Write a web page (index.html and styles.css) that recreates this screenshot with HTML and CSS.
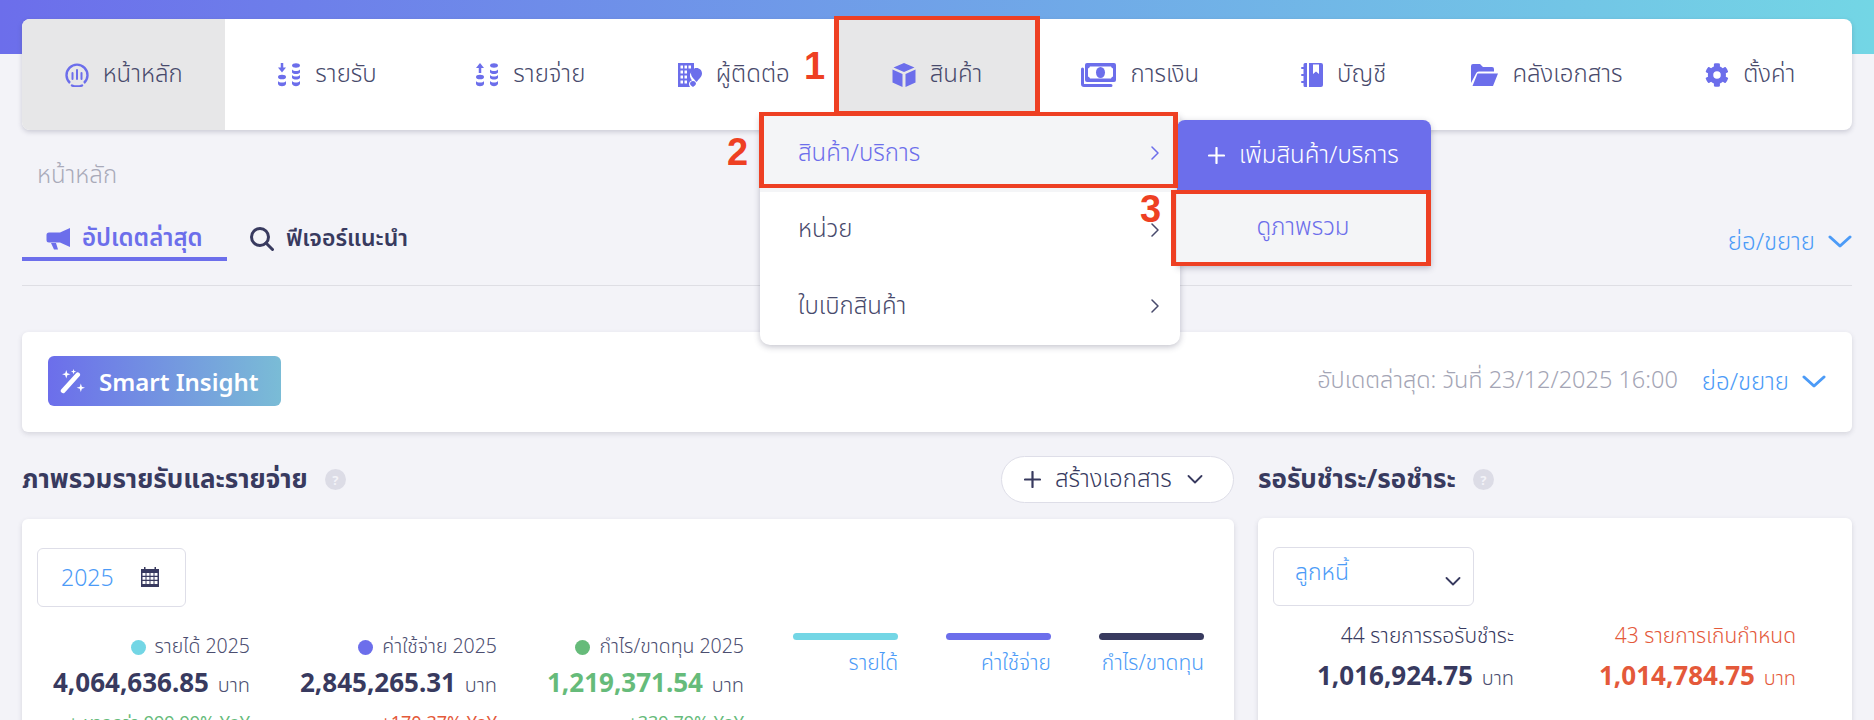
FILE: index.html
```html
<!DOCTYPE html>
<html lang="th">
<head>
<meta charset="utf-8">
<title>หน้าหลัก</title>
<link rel="stylesheet" href="styles.css">
</head>
<body>
<div class="hero"></div>
<div class="page">
  <nav class="nav">
    <a class="nav-item active"><svg class="ni" viewBox="0 0 24 24"><path d="M5 20A10.500 10.500 0 1 1 19 20" fill="none" stroke="currentColor" stroke-width="2.400"/><path d="M7 22.500c3 1.200 7 1.200 10 0" fill="none" stroke="currentColor" stroke-width="2.400" stroke-linecap="round"/><path d="M7.500 10v6M12 7v9M16.500 10v6" stroke="currentColor" stroke-width="2" stroke-linecap="round"/></svg>หน้าหลัก</a>
    <a class="nav-item"><svg class="ni" viewBox="0 0 24 24"><path d="M5 0v5" stroke="currentColor" stroke-width="2.500"/><path d="M1 4.500h8L5 9.500z" fill="currentColor"/><ellipse cx="5" cy="14" rx="4" ry="2.300" fill="currentColor"/><path d="M1 18c1 2 7 2 8 0v3c-1 3-7 3-8 0z" fill="currentColor"/><path d="M15 2.500c0-3 8-3 8 0s-8 3-8 0zM15 6.500c2 2 6 2 8 0v3c-2 2-6 2-8 0zM15 12c2 2 6 2 8 0v3c-2 2-6 2-8 0zM15 18c2 2 6 2 8 0v3c-2 3-6 3-8 0z" fill="currentColor"/></svg>รายรับ</a>
    <a class="nav-item"><svg class="ni" viewBox="0 0 24 24"><path d="M5 10V4" stroke="currentColor" stroke-width="2.500"/><path d="M1 5h8L5 0z" fill="currentColor"/><ellipse cx="5" cy="14" rx="4" ry="2.300" fill="currentColor"/><path d="M1 18c1 2 7 2 8 0v3c-1 3-7 3-8 0z" fill="currentColor"/><path d="M15 2.500c0-3 8-3 8 0s-8 3-8 0zM15 6.500c2 2 6 2 8 0v3c-2 2-6 2-8 0zM15 12c2 2 6 2 8 0v3c-2 2-6 2-8 0zM15 18c2 2 6 2 8 0v3c-2 3-6 3-8 0z" fill="currentColor"/></svg>รายจ่าย</a>
    <a class="nav-item"><svg class="ni" viewBox="0 0 24 24"><path fill-rule="evenodd" d="M0 0h16v7.500c-3 1-4.500 3.500-4 6 .3 1.500 1 2.800 2 4-1.500.200-3 1.500-3 3.500 0 1 .3 2 1 3H0zM2.500 2.500v3H5v-3zM6.500 2.500v3H9v-3zM10.500 2.500v3H13v-3zM2.500 7.500v3H5v-3zM6.500 7.500v3H9v-3zM2.500 12.500v3H5v-3zM6.500 12.500v3H9v-3zM2.500 17.500v3H5v-3zM6.500 17.500v3H9v-3z" fill="currentColor"/><path d="M18.500 5c3 0 5.500 2.300 5.500 5.500 0 3-3 5.500-5.500 8.500-2.500-3-5.500-5.500-5.500-8.500C13 7.300 15.500 5 18.500 5z" fill="currentColor"/><path d="M15 18c1.700 0 3 1.300 3 2.800 0 1.200-1.700 2.200-3 3.200-1.300-1-3-2-3-3.200C12 19.300 13.300 18 15 18z" fill="currentColor"/></svg>ผู้ติดต่อ</a>
    <a class="nav-item active"><svg class="ni" viewBox="0 0 24 24"><path d="M12 0l10.500 4.500L12 9 1.500 4.500z M0.500 6.500l10 4.500v13l-10-4.500z M23.500 6.500v13l-10 4.500V11z" fill="currentColor"/></svg>สินค้า</a>
    <a class="nav-item"><svg class="ni money" viewBox="0 0 35 24"><path d="M6 0h27a2 2 0 0 1 2 2v15a2 2 0 0 1-2 2H6a2 2 0 0 1-2-2V2a2 2 0 0 1 2-2z" fill="currentColor"/><path d="M9 3.500h21a3 3 0 0 0 2 2v8a3 3 0 0 0-2 2H9a3 3 0 0 0-2-2v-8a3 3 0 0 0 2-2z" fill="#fff"/><ellipse cx="19.500" cy="9.500" rx="4.500" ry="5.500" fill="currentColor"/><path d="M1.500 6v15a1.500 1.500 0 0 0 1.500 1.500h27" fill="none" stroke="currentColor" stroke-width="3" stroke-linecap="round"/></svg>การเงิน</a>
    <a class="nav-item"><svg class="ni book" viewBox="0 0 22 24"><path fill-rule="evenodd" d="M2.500 1.500A1.500 1.500 0 0 1 4 0h2v24H4a1.500 1.500 0 0 1-1.500-1.500V20H1a1 1 0 0 1 0-2h1.500v-5H1a1 1 0 0 1 0-2h1.500V6H1a1 1 0 0 1 0-2h1.500zM8 0h12a2 2 0 0 1 2 2v20a2 2 0 0 1-2 2H8zM12 1.500V11l3-2.500 3 2.500V1.500z" fill="currentColor"/></svg>บัญชี</a>
    <a class="nav-item"><svg class="ni folder" viewBox="0 0 27 24"><path d="M0 3a2 2 0 0 1 2-2h7l3 3h9a2 2 0 0 1 2 2v2.500H8c-1.500 0-2.500.7-3 2L0 20z" fill="currentColor"/><path d="M6.500 10.500H27l-5 12.500H1.500z" fill="currentColor"/></svg>คลังเอกสาร</a>
    <a class="nav-item"><svg class="ni" viewBox="0 0 512 512"><path d="M487 316l-43-25c4-23 4-47 0-70l43-25c5-3 7-9 5-14-11-36-30-68-55-95-4-4-10-5-15-2l-43 25c-18-15-39-27-61-35V25c0-6-4-11-9-12-37-8-75-8-110 0-6 1-9 6-9 12v50c-22 8-43 20-61 35L86 85c-5-3-11-2-15 2-25 27-44 59-55 95-2 5 0 11 5 14l43 25c-4 23-4 47 0 70l-43 25c-5 3-7 9-5 14 11 36 30 68 55 95 4 4 10 5 15 2l43-25c18 15 39 27 61 35v50c0 6 4 11 9 12 37 8 75 8 110 0 6-1 9-6 9-12v-50c22-8 43-20 61-35l43 25c5 3 11 2 15-2 25-27 44-59 55-95 2-5 0-11-5-14zM256 336a80 80 0 1 1 0-160 80 80 0 0 1 0 160z" fill="currentColor"/></svg>ตั้งค่า</a>
  </nav>

  <div class="crumb">หน้าหลัก</div>

  <div class="tabbar">
    <div class="tabs">
      <a class="tab on"><svg class="ti" viewBox="0 0 24 22"><path d="M24 0v19l-10-4.500H3a2.500 2.500 0 0 1-2.500-2.500V7A2.500 2.500 0 0 1 3 4.500h11z" fill="currentColor"/><path d="M5 15h5l2 6.500H8z" fill="currentColor"/></svg>อัปเดตล่าสุด</a>
      <a class="tab"><svg class="ti" viewBox="0 0 24 24"><circle cx="10" cy="10" r="8.500" fill="none" stroke="currentColor" stroke-width="3"/><path d="M16 16l6.500 6.500" stroke="currentColor" stroke-width="3" stroke-linecap="round"/></svg>ฟีเจอร์แนะนำ</a>
    </div>
    <a class="toggle">ย่อ/ขยาย<svg class="chev" viewBox="0 0 24 13"><path d="M2 2l10 9 10-9" fill="none" stroke="currentColor" stroke-width="3" stroke-linecap="round" stroke-linejoin="round"/></svg></a>
  </div>

  <section class="insight card">
    <div class="badge"><svg class="wand" viewBox="0 0 24 24"><path d="M3 21L17 5.500" stroke="#fff" stroke-width="4.500" stroke-linecap="round"/><path d="M6 1l1 3 3 1-3 1-1 3-1-3-3-1 3-1zM13 0l.7 1.800 1.800.7-1.800.7-.7 1.800-.7-1.800-1.800-.7 1.800-.7zM20 14l1 3 3 1-3 1-1 3-1-3-3-1 3-1z" fill="#fff"/></svg>Smart Insight</div>
    <div class="insight-r">
      <span class="updated">อัปเดตล่าสุด: วันที่ 23/12/2025 16:00</span>
      <a class="toggle">ย่อ/ขยาย<svg class="chev" viewBox="0 0 24 13"><path d="M2 2l10 9 10-9" fill="none" stroke="currentColor" stroke-width="3" stroke-linecap="round" stroke-linejoin="round"/></svg></a>
    </div>
  </section>

  <div class="cols">
    <div class="col-main">
      <div class="sec-head">
        <h2>ภาพรวมรายรับและรายจ่าย<span class="help">?</span></h2>
        <button class="create"><svg class="plus" viewBox="0 0 17 17"><path d="M8.500 1v15M1 8.500h15" stroke="currentColor" stroke-width="2.200" stroke-linecap="round"/></svg>สร้างเอกสาร<svg class="small-chev" viewBox="0 0 16 9"><path d="M1.500 1l6.500 6.500L14.500 1" fill="none" stroke="currentColor" stroke-width="1.800" stroke-linecap="round" stroke-linejoin="round"/></svg></button>
      </div>
      <div class="card panel">
        <div class="year">2025<svg class="cal" viewBox="0 0 18 20"><path fill-rule="evenodd" d="M0 2h3V0h1.500v2h9V0H15v2h3v18H0zM1.500 6v2.800h3V6zM5.500 6v2.800h3V6zM9.500 6v2.800h3V6zM13.500 6v2.800h3V6zM1.500 10v2.800h3V10zM5.500 10v2.800h3V10zM9.500 10v2.800h3V10zM13.500 10v2.800h3V10zM1.500 14v3h3v-3zM5.500 14v3h3v-3zM9.500 14v3h3v-3zM13.500 14v3h3v-3z" fill="#383a5f"/></svg></div>
        <div class="stats-row">
          <div class="stats">
            <div class="stat">
              <div class="stat-l"><i class="dot cyan"></i>รายได้ 2025</div>
              <div class="stat-v">4,064,636.85 <span>บาท</span></div>
              <div class="stat-d green">+ มากกว่า 999.99% YoY</div>
            </div>
            <div class="stat">
              <div class="stat-l"><i class="dot purple"></i>ค่าใช้จ่าย 2025</div>
              <div class="stat-v">2,845,265.31 <span>บาท</span></div>
              <div class="stat-d red">+170.37% YoY</div>
            </div>
            <div class="stat">
              <div class="stat-l"><i class="dot green-bg"></i>กำไร/ขาดทุน 2025</div>
              <div class="stat-v green">1,219,371.54 <span>บาท</span></div>
              <div class="stat-d green">+339.79% YoY</div>
            </div>
          </div>
          <div class="legend">
            <div class="leg"><i class="bar cyan"></i>รายได้</div>
            <div class="leg"><i class="bar purple"></i>ค่าใช้จ่าย</div>
            <div class="leg"><i class="bar navy"></i>กำไร/ขาดทุน</div>
          </div>
        </div>
      </div>
    </div>
    <div class="col-side">
      <div class="sec-head">
        <h2>รอรับชำระ/รอชำระ<span class="help">?</span></h2>
      </div>
      <div class="card panel side-panel">
        <div class="select"><span>ลูกหนี้</span><svg class="small-chev" viewBox="0 0 16 9"><path d="M1.500 1l6.500 6.500L14.500 1" fill="none" stroke="currentColor" stroke-width="1.800" stroke-linecap="round" stroke-linejoin="round"/></svg></div>
        <div class="dues">
          <div class="due">
            <div class="due-l">44 รายการรอรับชำระ</div>
            <div class="stat-v">1,016,924.75 <span>บาท</span></div>
          </div>
          <div class="due over">
            <div class="due-l">43 รายการเกินกำหนด</div>
            <div class="stat-v">1,014,784.75 <span>บาท</span></div>
          </div>
        </div>
      </div>
    </div>
  </div>
</div>

<div class="menu">
  <a class="menu-item sel">สินค้า/บริการ<svg class="mc" viewBox="0 0 10 14"><path d="M2 1l6 6-6 6" fill="none" stroke="currentColor" stroke-width="1.500" stroke-linecap="round" stroke-linejoin="round"/></svg></a>
  <a class="menu-item">หน่วย<svg class="mc" viewBox="0 0 10 14"><path d="M2 1l6 6-6 6" fill="none" stroke="currentColor" stroke-width="1.500" stroke-linecap="round" stroke-linejoin="round"/></svg></a>
  <a class="menu-item">ใบเบิกสินค้า<svg class="mc" viewBox="0 0 10 14"><path d="M2 1l6 6-6 6" fill="none" stroke="currentColor" stroke-width="1.500" stroke-linecap="round" stroke-linejoin="round"/></svg></a>
</div>
<div class="submenu">
  <a class="sub-add"><svg class="plus" viewBox="0 0 17 17"><path d="M8.500 1v15M1 8.500h15" stroke="currentColor" stroke-width="2.200" stroke-linecap="round"/></svg>เพิ่มสินค้า/บริการ</a>
  <a class="sub-view">ดูภาพรวม</a>
</div>

<div class="mark m1"></div>
<div class="mark m2"></div>
<div class="mark m3"></div>
<b class="num n1">1</b>
<b class="num n2">2</b>
<b class="num n3">3</b>
</body>
</html>
```
FILE: styles.css
```css
* { box-sizing: border-box; }
html, body { margin: 0; height: 720px; overflow: hidden; }
body {
  background: #f3f3f8;
  font-family: "Noto Sans", "Noto Sans Thai", "Liberation Sans", sans-serif;
  font-weight: 300;
  color: #383a5f;
  font-size: 20px;
  position: relative;
}
a { color: inherit; text-decoration: none; }
.hero {
  position: absolute; left: 0; top: 0; width: 100%; height: 54px;
  background: linear-gradient(90deg, #6c6eeb, #73d6e5);
}
.page { position: relative; padding: 19px 22px 0; }

.nav {
  display: flex; height: 111px; background: #fff; border-radius: 8px;
  box-shadow: 0 2px 5px rgba(60, 60, 90, .22); overflow: hidden;
}
.nav-item {
  display: flex; align-items: center; justify-content: center; gap: 14px;
  flex: 1 1 0; height: 100%; font-size: 24px; color: #484a6c; white-space: nowrap;
}
.active { background: #e7e7e8; }
.ni { width: 24px; height: 24px; color: #6c6eeb; flex: none; }
.ni.money { width: 35px; }
.ni.book { width: 22px; }
.ni.folder { width: 27px; }

.crumb { color: #a9aab9; font-size: 24px; margin: 26px 0 0 15px; height: 36px; line-height: 36px; }

.tabbar {
  display: flex; justify-content: space-between; align-items: flex-end;
  height: 94px; border-bottom: 1px solid #dedee4;
}
.tabs { display: flex; padding-bottom: 28px; gap: 23px; }
.tab {
  display: flex; align-items: center; gap: 12px; font-size: 23px; font-weight: 600;
  height: 37px; white-space: nowrap;
}
.tab.on { color: #6c6eeb; width: 205px; padding-left: 24px; font-size: 24px; box-shadow: 0 4px 0 #6c6eeb; }
.ti { width: 24px; height: 24px; flex: none; }
.toggle {
  display: inline-flex; align-items: center; gap: 13px; color: #4c9bf7; font-size: 24px;
  line-height: 30px; white-space: nowrap;
}
.tabbar .toggle { margin-bottom: 29px; }
.chev { width: 24px; height: 13px; }

.card { background: #fff; border-radius: 6px; box-shadow: 0 2px 5px rgba(60, 60, 90, .16); }
.insight {
  display: flex; justify-content: space-between; align-items: center;
  height: 100px; margin-top: 46px; padding: 0 26px 2px 26px;
}
.badge {
  display: flex; align-items: center; gap: 14px; width: 233px; height: 50px; padding-left: 12px;
  border-radius: 6px; background: linear-gradient(90deg, #6c6eeb, #7abcd6);
  color: #fff; font-size: 24px; font-weight: 600; white-space: nowrap;
}
.wand { width: 25px; height: 25px; flex: none; }
.insight-r { display: flex; align-items: center; gap: 24px; }
.updated { color: #a4a5b5; font-size: 23.500px; white-space: nowrap; }

.cols { display: flex; gap: 24px; margin-top: 24px; }
.col-main { width: 1212px; flex: none; }
.col-side { flex: 1; }
.sec-head { display: flex; justify-content: space-between; align-items: center; height: 47px; }
h2 { margin: 0; font-size: 26px; font-weight: 700; display: flex; align-items: center; white-space: nowrap; }
.help {
  display: inline-flex; align-items: center; justify-content: center; width: 21px; height: 21px; margin-left: 17px;
  border-radius: 50%; background: #dcdce6; color: #f3f3f8; font-size: 13px; font-weight: 700;
}
.create {
  display: flex; align-items: center; height: 47px; width: 233px; padding: 0 0 0 22px; border: 1px solid #dedee8;
  border-radius: 24px; background: #fff; font: inherit; color: #383a5f; font-size: 24px; white-space: nowrap;
}
.plus { width: 17px; height: 17px; margin-right: 14px; flex: none; }
.create .small-chev { margin-left: 15px; }
.small-chev { width: 16px; height: 9px; flex: none; color: #383a5f; }

.panel { margin-top: 16px; height: 400px; padding: 29px 15px; }
.year {
  display: flex; align-items: center; justify-content: space-between; width: 149px; height: 59px; padding: 0 26px 2px 23px;
  border: 1px solid #dedee8; border-radius: 6px; color: #4c9bf7; font-size: 23px;
}
.cal { width: 18px; height: 20px; }
.stats-row { display: flex; justify-content: space-between; margin-top: 24px; }
.stats { display: flex; }
.stat { width: 247px; text-align: right; }
.stat:first-child { width: 213px; }
.stat-l { display: flex; align-items: center; justify-content: flex-end; font-size: 19.500px; color: #4c4e70; height: 32px; white-space: nowrap; }
.dot { width: 15px; height: 15px; border-radius: 50%; margin-right: 9px; }
.stat-v { font-size: 26px; font-weight: 700; margin-top: -3px; white-space: nowrap; line-height: 44px; }
.stat-v span { font-size: 20px; font-weight: 300; color: #4c4e70; margin-left: 2px; }
.stat-d { font-size: 18px; font-weight: 400; line-height: 24px; margin-top: 3px; white-space: nowrap; }
.cyan { background: #73d6e5; }
.purple { background: #6c6eeb; }
.green-bg { background: #66bb7a; }
.navy { background: #383a5f; }
.green { color: #66bb7a; }
.red { color: #e4593a; }
.legend { display: flex; gap: 48px; margin-right: 15px; padding-top: 2px; }
.leg { width: 105px; text-align: right; color: #4c9bf7; font-size: 21px; line-height: 28px; white-space: nowrap; }
.bar { display: block; height: 7px; border-radius: 4px; margin-bottom: 8px; }

.side-panel { height: 300px; margin-top: 15px; }
.select {
  display: flex; justify-content: space-between; width: 201px; height: 59px; padding: 8px 12px 0 21px;
  border: 1px solid #dedee8; border-radius: 6px; color: #4c9bf7; font-size: 23px; line-height: 30px;
}
.select .small-chev { margin-top: 21px; }
.dues { display: flex; margin-top: 13px; }
.due { text-align: right; width: 241px; }
.due + .due { width: 282px; }
.due-l { font-size: 21px; height: 32px; line-height: 32px; white-space: nowrap; }
.due .stat-v { margin-top: 2px; }
.over, .over .due-l, .over .stat-v, .over .stat-v span { color: #e4593a; }

.menu {
  position: absolute; left: 760px; top: 115px; width: 420px; height: 230px; background: #fff;
  border-radius: 0 0 10px 10px; box-shadow: 0 2px 6px rgba(60, 60, 90, .3);
}
.menu-item {
  display: flex; align-items: center; justify-content: space-between; height: 76.500px; padding: 0 20px 0 38px;
  font-size: 24px; color: #484a6c; white-space: nowrap;
}
.menu-item.sel { color: #6c6eeb; background: #f4f5f7; }
.mc { width: 10px; height: 14px; }
.submenu {
  position: absolute; left: 1177px; top: 120px; width: 254px; height: 146px; background: #f4f5f7;
  border-radius: 8px 8px 0 0; box-shadow: 0 2px 6px rgba(60, 60, 90, .3);
}
.sub-add {
  display: flex; align-items: center; height: 70px; padding-left: 31px; background: #6c6eeb; color: #fff;
  border-radius: 8px 8px 0 0; font-size: 24px; white-space: nowrap;
}
.sub-view { display: block; text-align: center; color: #6c6eeb; font-size: 24px; line-height: 72px; padding-right: 2px; }

.mark { position: absolute; border-style: solid; border-color: #ee4023; border-width: 4px 5px; }
.m1 { left: 834px; top: 16px; width: 206px; height: 99px; }
.m2 { left: 759px; top: 112px; width: 419px; height: 76px; }
.m3 { left: 1171px; top: 190px; width: 260px; height: 76px; }
.num { position: absolute; color: #ee4023; font: 700 38px/1 "Liberation Sans", sans-serif; }
.n1 { left: 804px; top: 47px; }
.n2 { left: 727px; top: 133px; }
.n3 { left: 1140px; top: 190px; }
```
